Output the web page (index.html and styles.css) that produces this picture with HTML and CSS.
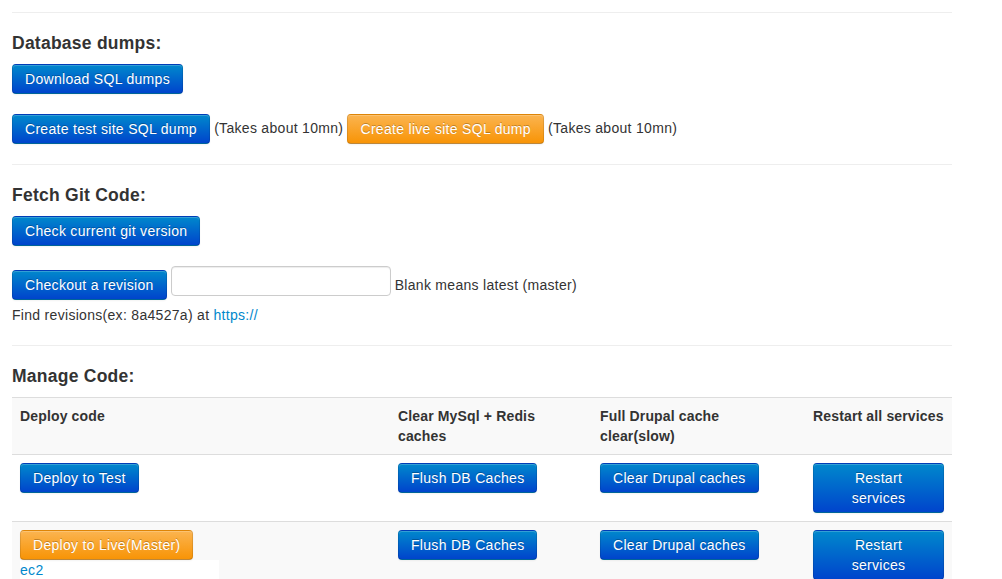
FILE: index.html
```html
<!DOCTYPE html>
<html>
<head>
<meta charset="utf-8">
<link rel="stylesheet" href="styles.css">
</head>
<body>
<div class="container">
  <section class="block">
    <div class="rule"></div>
    <h4 class="title">Database dumps:</h4>
    <div class="line"><a class="btn btn-primary">Download SQL dumps</a></div>
    <div class="line gap"><a class="btn btn-primary">Create test site SQL dump</a> (Takes about 10mn) <a class="btn btn-warning">Create live site SQL dump</a> (Takes about 10mn)</div>
  </section>
  <section class="block">
    <div class="rule"></div>
    <h4 class="title">Fetch Git Code:</h4>
    <div class="line"><a class="btn btn-primary">Check current git version</a></div>
    <div class="revision-row">
      <a class="btn btn-primary rev-btn">Checkout a revision</a>
      <input class="rev-input" type="text">
      <span class="rev-note">Blank means latest (master)</span>
    </div>
    <p class="find">Find revisions(ex: 8a4527a) at <a class="link">https://</a></p>
  </section>
  <section class="block">
    <div class="rule"></div>
    <h4 class="title">Manage Code:</h4>
    <table class="table">
      <colgroup>
        <col class="c1"><col class="c2"><col class="c3"><col class="c4">
      </colgroup>
      <tbody>
        <tr>
          <th>Deploy code</th>
          <th>Clear MySql + Redis caches</th>
          <th>Full Drupal cache clear(slow)</th>
          <th>Restart all services</th>
        </tr>
        <tr>
          <td><a class="btn btn-primary">Deploy to Test</a></td>
          <td><a class="btn btn-primary">Flush DB Caches</a></td>
          <td><a class="btn btn-primary">Clear Drupal caches</a></td>
          <td><a class="btn btn-primary btn-full">Restart<br>services</a></td>
        </tr>
        <tr>
          <td><a class="btn btn-warning">Deploy to Live(Master)</a><div class="host"><a class="link">ec2</a></div></td>
          <td><a class="btn btn-primary">Flush DB Caches</a></td>
          <td><a class="btn btn-primary">Clear Drupal caches</a></td>
          <td><a class="btn btn-primary btn-full">Restart<br>services</a></td>
        </tr>
      </tbody>
    </table>
  </section>
</div>
</body>
</html>
```

FILE: styles.css
```css
html, body {
  margin: 0;
  padding: 0;
  background: #fff;
}
body {
  font-family: "Liberation Sans", Arial, sans-serif;
  font-size: 14px;
  line-height: 20px;
  letter-spacing: 0.3px;
  color: #333;
}
.container {
  width: 940px;
  padding: 12px 0 0 12px;
}
.rule {
  border-top: 1px solid #eee;
}
.title {
  font-size: 17.5px;
  line-height: 20px;
  font-weight: bold;
  letter-spacing: 0.25px;
  margin: 20px 0 11px;
  color: #333;
}
.line {
  white-space: nowrap;
}
.gap {
  margin-top: 20px;
  margin-bottom: 20px;
}
.btn {
  display: inline-block;
  box-sizing: border-box;
  padding: 4px 12px;
  font-size: 14px;
  line-height: 20px;
  color: #fff;
  text-align: center;
  vertical-align: middle;
  cursor: pointer;
  border: 1px solid;
  border-color: rgba(0,0,0,0.1) rgba(0,0,0,0.1) rgba(0,0,0,0.25);
  border-radius: 4px;
  text-shadow: 0 -1px 0 rgba(0,0,0,0.25);
  box-shadow: inset 0 1px 0 rgba(255,255,255,0.2), 0 1px 2px rgba(0,0,0,0.05);
  text-decoration: none;
}
.btn-full {
  width: 100%;
}
.btn-primary {
  background-color: #006dcc;
  background-image: linear-gradient(to bottom, #0088cc, #0044cc);
}
.btn-warning {
  background-color: #faa732;
  background-image: linear-gradient(to bottom, #fbb450, #f89406);
}
.revision-row {
  display: flex;
  align-items: flex-start;
  gap: 4px;
  margin-top: 20px;
}
.rev-btn {
  margin-top: 4px;
}
.rev-input {
  box-sizing: border-box;
  width: 220px;
  height: 30px;
  margin: 0;
  padding: 4px 6px;
  border: 1px solid #ccc;
  border-radius: 4px;
  box-shadow: inset 0 1px 1px rgba(0,0,0,0.075);
  font: 14px/20px "Liberation Sans", Arial, sans-serif;
}
.rev-note {
  margin-top: 9px;
}
.find {
  margin: 5px 0 20px;
}
.link {
  color: #0088cc;
  text-decoration: none;
}
.table {
  width: 940px;
  border-collapse: collapse;
  border-spacing: 0;
  table-layout: fixed;
}
.c1 { width: 378px; }
.c2 { width: 202px; }
.c3 { width: 213px; }
.c4 { width: 147px; }
.table th,
.table td {
  padding: 8px;
  line-height: 20px;
  text-align: left;
  vertical-align: top;
  border-top: 1px solid #ddd;
}
.table th {
  font-weight: bold;
  letter-spacing: 0.15px;
}
.table tr:nth-child(odd) > td,
.table tr:nth-child(odd) > th {
  background-color: #f9f9f9;
}
.host {
  width: 199px;
  background: #fff;
}
```
